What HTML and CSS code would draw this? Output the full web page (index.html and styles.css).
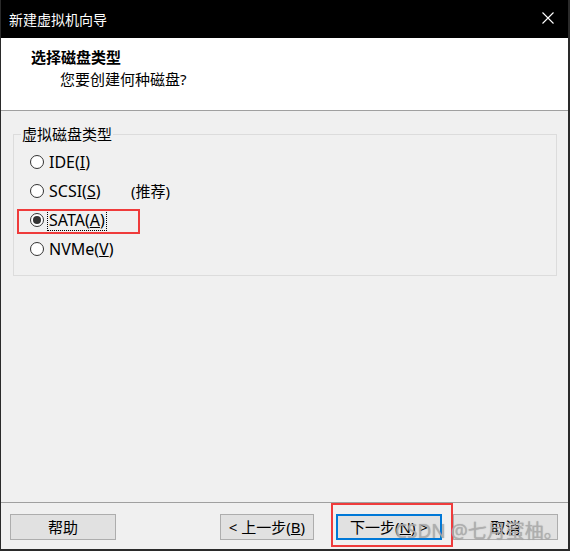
FILE: index.html
```html
<!DOCTYPE html>
<html lang="zh-CN">
<head>
<meta charset="utf-8">
<title>新建虚拟机向导</title>
<link rel="stylesheet" href="styles.css">
</head>
<body>
<div class="window">
  <div class="titlebar">
    <span class="title">新建虚拟机向导</span>
    <svg class="close" width="12" height="12" viewBox="0 0 12 12"><path d="M0.5 0.5L11.5 11.5M11.5 0.5L0.5 11.5" stroke="#fff" stroke-width="1.1" fill="none"/></svg>
  </div>
  <div class="header">
    <div class="h-title">选择磁盘类型</div>
    <div class="h-sub">您要创建何种磁盘?</div>
  </div>
  <div class="body">
    <fieldset class="group">
      <legend class="legend">虚拟磁盘类型</legend>
      <div class="options">
        <div class="row"><span class="radio"></span><span class="label">IDE(<u>I</u>)</span></div>
        <div class="row"><span class="radio"></span><span class="label label-wide">SCSI(<u>S</u>)</span><span class="recommend">(推荐)</span></div>
        <div class="row"><span class="radio checked"></span><span class="label focused">SATA(<u>A</u>)</span></div>
        <div class="row"><span class="radio"></span><span class="label">NVMe(<u>V</u>)</span></div>
      </div>
    </fieldset>
  </div>
  <div class="footer">
    <button class="btn btn-help">帮助</button>
    <button class="btn btn-back">&lt; 上一步(<u>B</u>)</button>
    <button class="btn btn-next">下一步(<u>N</u>) &gt;</button>
    <button class="btn btn-cancel">取消</button>
  </div>
  <div class="mark mark-sata"></div>
  <div class="mark mark-next"></div>
  <div class="watermark">CSDN @七月蜜柚。</div>
</div>
</body>
</html>
```

FILE: styles.css
```css
* { box-sizing: border-box; }
html, body { margin: 0; padding: 0; }
body {
  font-family: "Noto Sans", "Noto Sans CJK SC", sans-serif;
  font-size: 15px;
  color: #000;
  background: #f0f0f0;
}
.window {
  position: relative;
  width: 570px;
  height: 551px;
  border-left: 1px solid #2a2a2a;
  border-right: 2px solid #2a2a2a;
  border-bottom: 2px solid #2a2a2a;
  display: flex;
  flex-direction: column;
  background: #f0f0f0;
  overflow: hidden;
}
.titlebar {
  height: 38px;
  background: #000;
  color: #fff;
  display: flex;
  align-items: center;
  padding: 0 14px 1px 8px;
  font-size: 14px;
  flex: none;
}
.close { margin-left: auto; display: block; margin-top: -1px; }
.header {
  height: 73px;
  background: #fff;
  border-bottom: 1px solid #a0a0a0;
  padding: 8px 0 0 30px;
  flex: none;
  line-height: 22px;
}
.h-title { font-weight: 700; }
.h-sub { margin-left: 29px; }
.body {
  flex: 1;
  min-height: 0;
}
.group {
  margin: 13px 11px 0 12px;
  border: 1px solid #dcdcdc;
  padding: 2px 0 12px 7px;
  min-width: 0;
}
.legend {
  padding: 0 1px;
  line-height: 21px;
}
.options { margin-left: 9px; }
.row {
  height: 29px;
  display: flex;
  align-items: center;
}
.radio {
  width: 14px;
  height: 14px;
  border: 1px solid #333;
  border-radius: 50%;
  background: #fff;
  display: flex;
  align-items: center;
  justify-content: center;
  margin-right: 3px;
  flex: none;
}
.radio.checked::after {
  content: "";
  width: 8px;
  height: 8px;
  border-radius: 50%;
  background: #333;
}
.label {
  display: inline-block;
  font-size: 16px;
  line-height: 20px;
  padding: 0 1px;
  border: 1px solid transparent;
}
.label-wide { width: 84px; }
.label.focused { border: 1px dotted #000; }
.footer {
  flex: none;
  border-top: 1px solid #a0a0a0;
  padding: 11px 0 9px 9px;
  display: flex;
}
.btn {
  font-family: "Noto Sans", "Noto Sans CJK SC", sans-serif;
  font-size: 15px;
  color: #000;
  height: 26px;
  background: #e1e1e1;
  border: 1px solid #adadad;
  padding: 0;
  line-height: 22px;
  flex: none;
}
.btn-help { width: 106px; }
.btn-back { width: 94px; margin-left: 104px; }
.btn-next { width: 106px; margin-left: 22px; border: 2px solid #0078d7; }
.btn-cancel { width: 105px; margin-left: 11px; }
.mark {
  position: absolute;
  border: 2px solid #ef3b3b;
}
.mark-sata { left: 16px; top: 209px; width: 123px; height: 25px; }
.mark-next { left: 330px; top: 503px; width: 122px; height: 44px; }
.watermark {
  position: absolute;
  left: 394px;
  top: 518px;
  font-family: "Noto Sans", "Noto Sans CJK SC", sans-serif;
  font-size: 19px;
  line-height: 26px;
  color: rgba(175, 175, 175, 0.85);
  text-shadow: 0 0 1px rgba(120, 120, 120, 0.6);
  white-space: nowrap;
}
```
